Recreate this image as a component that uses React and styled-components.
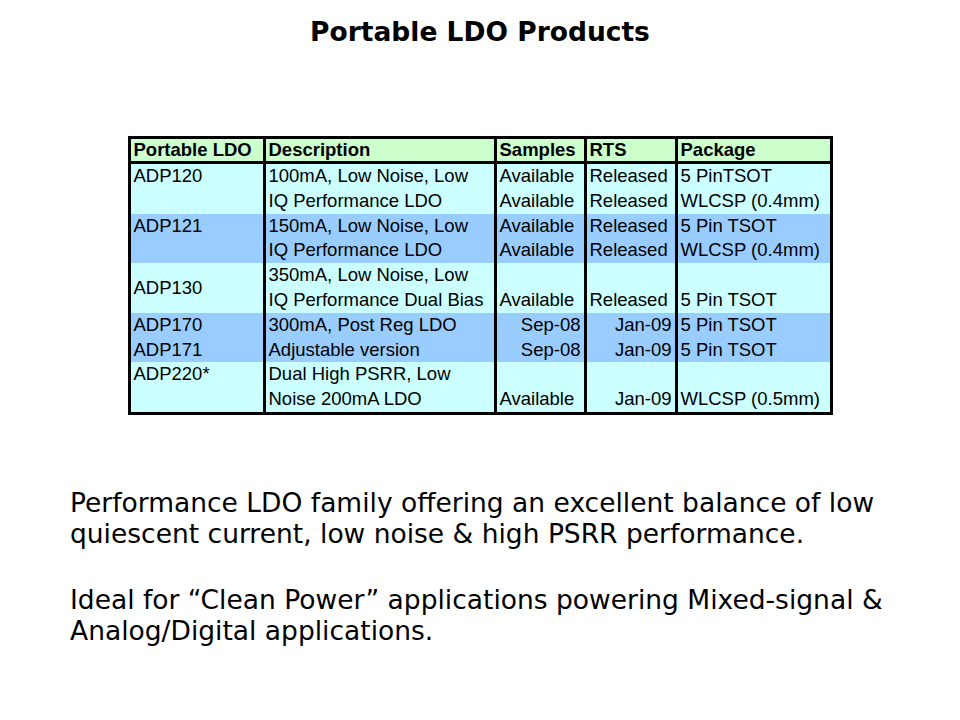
import React from 'react';
import styled, { createGlobalStyle } from 'styled-components';

const GlobalStyle = createGlobalStyle`
  html, body {
    margin: 0;
    padding: 0;
    background: #ffffff;
  }
`;

const Slide = styled.div`
  width: 960px;
  height: 720px;
  display: flex;
  flex-direction: column;
  align-items: center;
  background: #ffffff;
  color: #000000;
`;

const Title = styled.h1`
  margin: 17px 0 0;
  font-family: "DejaVu Sans", Verdana, sans-serif;
  font-weight: bold;
  font-size: 26.5px;
  line-height: 30px;
`;

const Sheet = styled.table`
  margin-top: 89px;
  border-collapse: collapse;
  border: 3px solid #000;
  font-family: "Liberation Sans", Arial, sans-serif;
  font-size: 18.5px;
  table-layout: fixed;
`;

const HeadCell = styled.th`
  background: #ccffcc;
  font-weight: bold;
  text-align: left;
  padding: 0 3px;
  height: 22px;
  line-height: 22px;
  border-left: 3px solid #000;
  border-bottom: 3px solid #000;
  white-space: nowrap;
  overflow: hidden;
`;

const Cell = styled.td`
  background: ${p => (p.$band ? '#99ccff' : '#ccffff')};
  text-align: ${p => (p.$right ? 'right' : 'left')};
  vertical-align: ${p => p.$valign || 'middle'};
  padding: 0 3px;
  height: 24.8px;
  line-height: 24.8px;
  border-left: 3px solid #000;
  white-space: nowrap;
  overflow: hidden;
`;

const Copy = styled.div`
  align-self: flex-start;
  margin: 72px 0 0 70px;
  font-family: "DejaVu Sans", Verdana, sans-serif;
  font-size: 26.5px;
  line-height: 31px;
`;

const Para = styled.p`
  margin: 0 0 35px;
`;

const widths = [135, 231, 90, 91, 155];
const heads = ['Portable LDO', 'Description', 'Samples', 'RTS', 'Package'];

// each line of the sheet; part: [text, rowSpan, valign] or null when covered by a span
const lines = [
  { band: false, part: ['ADP120', 2, 'top'], desc: '100mA, Low Noise, Low', samp: 'Available', rts: 'Released', pkg: '5 PinTSOT' },
  { band: false, part: null, desc: 'IQ Performance LDO', samp: 'Available', rts: 'Released', pkg: 'WLCSP (0.4mm)' },
  { band: true, part: ['ADP121', 2, 'top'], desc: '150mA, Low Noise, Low', samp: 'Available', rts: 'Released', pkg: '5 Pin TSOT' },
  { band: true, part: null, desc: 'IQ Performance LDO', samp: 'Available', rts: 'Released', pkg: 'WLCSP (0.4mm)' },
  { band: false, part: ['ADP130', 2, 'middle'], desc: '350mA, Low Noise, Low', samp: '', rts: '', pkg: '' },
  { band: false, part: null, desc: 'IQ Performance Dual Bias', samp: 'Available', rts: 'Released', pkg: '5 Pin TSOT' },
  { band: true, part: ['ADP170', 1, 'middle'], desc: '300mA, Post Reg LDO', samp: 'Sep-08', rts: 'Jan-09', pkg: '5 Pin TSOT', right: true },
  { band: true, part: ['ADP171', 1, 'middle'], desc: 'Adjustable version', samp: 'Sep-08', rts: 'Jan-09', pkg: '5 Pin TSOT', right: true },
  { band: false, part: ['ADP220*', 2, 'top'], desc: 'Dual High PSRR, Low', samp: '', rts: '', pkg: '' },
  { band: false, part: null, desc: 'Noise 200mA LDO', samp: 'Available', rts: 'Jan-09', pkg: 'WLCSP (0.5mm)', rtsRight: true },
];

const App = () => (
  <>
    <GlobalStyle />
    <Slide>
      <Title>Portable LDO Products</Title>
      <Sheet>
        <colgroup>
          {widths.map((w, i) => (
            <col key={i} style={{ width: w }} />
          ))}
        </colgroup>
        <thead>
          <tr>
            {heads.map(h => (
              <HeadCell key={h}>{h}</HeadCell>
            ))}
          </tr>
        </thead>
        <tbody>
          {lines.map((l, i) => (
            <tr key={i}>
              {l.part && (
                <Cell $band={l.band} rowSpan={l.part[1]} $valign={l.part[2]}>
                  {l.part[0]}
                </Cell>
              )}
              <Cell $band={l.band}>{l.desc}</Cell>
              <Cell $band={l.band} $right={l.right}>{l.samp}</Cell>
              <Cell $band={l.band} $right={l.right || l.rtsRight}>{l.rts}</Cell>
              <Cell $band={l.band}>{l.pkg}</Cell>
            </tr>
          ))}
        </tbody>
      </Sheet>
      <Copy>
        <Para>
          Performance LDO family offering an excellent balance of low
          <br />
          quiescent current, low noise &amp; high PSRR performance.
        </Para>
        <Para>
          Ideal for “Clean Power” applications powering Mixed-signal &amp;
          <br />
          Analog/Digital applications.
        </Para>
      </Copy>
    </Slide>
  </>
);

export default App;
